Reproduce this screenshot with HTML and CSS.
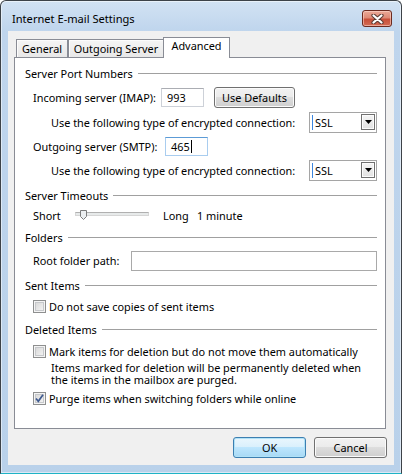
FILE: index.html
```html
<!DOCTYPE html>
<html>
<head>
<meta charset="utf-8">
<title>Internet E-mail Settings</title>
<link rel="stylesheet" href="styles.css">
</head>
<body>
<div class="window">
  <div class="titlebar">
    <span class="title">Internet E-mail Settings</span>
    <div class="close">
      <svg width="13" height="10" viewBox="0 0 13 10"><path d="M2.5 1.5 L10.5 8.5 M10.5 1.5 L2.5 8.5" stroke="#5a3a33" stroke-width="4.2" stroke-linecap="round"/><path d="M2.5 1.5 L10.5 8.5 M10.5 1.5 L2.5 8.5" stroke="#ffffff" stroke-width="2.2" stroke-linecap="round"/></svg>
    </div>
  </div>
  <div class="client">
    <div class="tabs">
      <div class="tab tab-general">General</div>
      <div class="tab tab-outgoing">Outgoing Server</div>
      <div class="tab tab-advanced">Advanced</div>
    </div>
    <div class="panel">
      <div class="group mt7"><span>Server Port Numbers</span></div>
      <div class="row mt6">
        <span class="label w-incoming">Incoming server (IMAP):</span>
        <div class="textbox port">993</div>
        <button class="btn btn-defaults">Use Defaults</button>
      </div>
      <div class="row mt5 indent">
        <span>Use the following type of encrypted connection:</span>
        <div class="combo"><span class="caret"></span><span class="combo-text">SSL</span><span class="combo-arrow"><svg width="7" height="4" viewBox="0 0 7 4"><path d="M0 0 H7 L3.5 4 Z" fill="#000"/></svg></span></div>
      </div>
      <div class="row mt4">
        <span class="label w-outgoing">Outgoing server (SMTP):</span>
        <div class="textbox port focused">465<span class="cursor"></span></div>
      </div>
      <div class="row mt4 indent">
        <span>Use the following type of encrypted connection:</span>
        <div class="combo"><span class="caret"></span><span class="combo-text">SSL</span><span class="combo-arrow"><svg width="7" height="4" viewBox="0 0 7 4"><path d="M0 0 H7 L3.5 4 Z" fill="#000"/></svg></span></div>
      </div>

      <div class="group mt7"><span>Server Timeouts</span></div>
      <div class="row mt2">
        <span class="label w-short">Short</span>
        <div class="slider">
          <span class="track"></span>
          <svg class="thumb" width="7" height="10" viewBox="0 0 7 10"><path d="M0.5 0.5 H6.5 V6.5 L3.5 9.5 L0.5 6.5 Z" fill="#eceff1" stroke="#7c7c7c"/></svg>
        </div>
        <span class="label w-long">Long</span>
        <span>1 minute</span>
      </div>

      <div class="group mt4"><span>Folders</span></div>
      <div class="row mt5">
        <span class="label w-root">Root folder path:</span>
        <div class="textbox root"></div>
      </div>

      <div class="group mt7"><span>Sent Items</span></div>
      <div class="row mt3">
        <span class="check"></span>
        <span>Do not save copies of sent items</span>
      </div>

      <div class="group mt5"><span>Deleted Items</span></div>
      <div class="row mt4">
        <span class="check"></span>
        <span>Mark items for deletion but do not move them automatically</span>
      </div>
      <div class="note">
        <div class="note-line">Items marked for deletion will be permanently deleted when</div>
        <div class="note-line">the items in the mailbox are purged.</div>
      </div>
      <div class="row mt2">
        <span class="check checked"><svg width="11" height="11" viewBox="0 0 11 11"><path d="M2 5.5 L4.3 8.3 L9 1.8" fill="none" stroke="#3f5a8f" stroke-width="1.7"/></svg></span>
        <span>Purge items when switching folders while online</span>
      </div>
    </div>
    <div class="buttons">
      <button class="btn btn-dialog btn-default">OK</button>
      <button class="btn btn-dialog">Cancel</button>
    </div>
  </div>
</div>
</body>
</html>
```

FILE: styles.css
```css
* {
  box-sizing: border-box;
}

html, body {
  margin: 0;
  padding: 0;
}

body {
  width: 402px;
  height: 474px;
  overflow: hidden;
  background: #ffffff;
  font-family: "Noto Sans", "Open Sans", sans-serif;
  font-size: 10.9px;
  color: #000;
}

.window {
  width: 402px;
  height: 474px;
  border: 1px solid #3d4248;
  border-bottom-color: #1fb3c6;
  border-radius: 6px 6px 0 0;
  background: linear-gradient(#d2e2f3 0, #bfd5ed 30px, #b9d1ea 100%);
  box-shadow: inset 0 0 0 1px rgba(255, 255, 255, 0.5);
  padding: 0 7px 8px 7px;
  display: flex;
  flex-direction: column;
}

.titlebar {
  height: 30px;
  display: flex;
  align-items: flex-start;
  justify-content: space-between;
  padding-left: 4px;
}

.title {
  margin-top: 10px;
  font-size: 11.1px;
  line-height: 16px;
}

.close {
  margin-top: 9px;
  margin-right: 2px;
  width: 30px;
  height: 17px;
  border: 1px solid #6b2a20;
  border-radius: 3px;
  background: linear-gradient(#eba998 0, #de8a76 45%, #c84f39 55%, #d36b54 100%);
  box-shadow: inset 0 0 0 1px rgba(255, 220, 210, 0.55);
  display: flex;
  align-items: center;
  justify-content: center;
}

.client {
  flex: 1;
  background: #f0f0f0;
  display: flex;
  flex-direction: column;
}

.tabs {
  height: 26px;
  display: flex;
  align-items: flex-end;
  padding-left: 8px;
}

.tab {
  height: 18px;
  border: 1px solid #898c95;
  border-bottom: none;
  background: linear-gradient(#f5f5f5, #e8e8e8);
  box-shadow: inset 1px 1px 0 #fcfcfc;
  display: flex;
  align-items: center;
  justify-content: center;
  line-height: 16px;
  padding-top: 1px;
}

.tab-general {
  width: 52px;
}

.tab-outgoing {
  width: 96px;
}

.tab-advanced {
  width: 67px;
  height: 21px;
  margin-left: -1px;
  margin-bottom: -1px;
  background: #ffffff;
  box-shadow: none;
  position: relative;
  z-index: 1;
  padding-top: 0;
  padding-bottom: 4px;
}

.panel {
  margin-left: 6px;
  width: 372px;
  height: 372px;
  border: 1px solid #898c95;
  background: #ffffff;
  padding: 0 8px 0 10px;
}

.group {
  height: 16px;
  display: flex;
  align-items: center;
  white-space: nowrap;
}

.group::after {
  content: "";
  flex: 1;
  height: 1px;
  background: #a0a0a0;
  margin-left: 5px;
}

.row {
  height: 20px;
  display: flex;
  align-items: center;
  padding-left: 8px;
  white-space: nowrap;
}

.row.indent {
  padding-left: 26px;
}

.mt2 { margin-top: 2px; }
.mt3 { margin-top: 3px; }
.mt4 { margin-top: 4px; }
.mt5 { margin-top: 5px; }
.mt6 { margin-top: 6px; }
.mt7 { margin-top: 7px; }

.label {
  flex: none;
}

.w-incoming { width: 128px; }
.w-outgoing { width: 132px; }
.w-short { width: 42px; }
.w-long { width: 34px; margin-left: 14px; }
.w-root { width: 98px; }

.textbox {
  height: 19px;
  background: #fff;
  border: 1px solid #cdd1d8;
  border-top-color: #abadb3;
  display: flex;
  align-items: center;
  padding-left: 5px;
}

.textbox.port {
  width: 43px;
}

.textbox.focused {
  border-color: #a9cdef;
  border-top-color: #5c9bd6;
}

.cursor {
  width: 1px;
  height: 13px;
  background: #000;
  margin-left: 1px;
}

.textbox.root {
  flex: 1;
  height: 20px;
  border: 1px solid #a9a9a9;
  margin-top: 1px;
}

.btn {
  font-family: inherit;
  font-size: inherit;
  color: #000;
  border: 1px solid #707070;
  border-radius: 3px;
  background: linear-gradient(#f2f2f2 0, #ebebeb 50%, #dddddd 50%, #cfcfcf 100%);
  box-shadow: inset 0 0 0 1px #fbfbfb;
  padding: 0;
  margin: 0;
  display: flex;
  align-items: center;
  justify-content: center;
}

.btn-defaults {
  width: 81px;
  height: 21px;
  margin-left: 10px;
}

.combo {
  margin-left: auto;
  width: 68px;
  height: 21px;
  border: 1px solid #a5a5a5;
  background: #fff;
  display: flex;
  align-items: center;
  padding: 1px;
}

.caret {
  width: 1px;
  height: 15px;
  background: #3c87e0;
  margin-left: 1px;
}

.combo-text {
  margin-left: 2px;
}

.combo-arrow {
  margin-left: auto;
  width: 14px;
  height: 16px;
  border: 1px solid #707070;
  background: linear-gradient(#f4f4f4, #e2e2e2);
  box-shadow: inset 0 0 0 1px #fcfcfc;
  display: flex;
  align-items: center;
  justify-content: center;
}

.slider {
  position: relative;
  width: 74px;
  height: 20px;
  flex: none;
}

.track {
  position: absolute;
  left: 0;
  right: 0;
  top: 7px;
  height: 4px;
  background: #e7eaea;
  border: 1px solid #d6d6d6;
  border-top-color: #b0b0b0;
}

.thumb {
  position: absolute;
  left: 5px;
  top: 5px;
}

.check {
  width: 13px;
  height: 13px;
  flex: none;
  border: 1px solid #8e8f8f;
  background: linear-gradient(135deg, #d3d3d3, #f8f8f8);
  box-shadow: inset 0 0 0 1px #f4f4f4, inset 0 0 0 2px #c6c8cb;
  margin-right: 3px;
  display: flex;
  align-items: center;
  justify-content: center;
}

.note {
  margin-top: 1px;
  padding-left: 26px;
}

.note-line {
  height: 12px;
  line-height: 12px;
  white-space: nowrap;
}

.buttons {
  display: flex;
  justify-content: flex-end;
  gap: 8px;
  margin-top: 8px;
  padding-right: 7px;
}

.btn-dialog {
  width: 73px;
  height: 21px;
}

.btn-default {
  border-color: #3c7fb1;
  box-shadow: inset 0 0 0 1px #b1e2f7;
  background: linear-gradient(#eaf6fd 0, #d9f0fc 50%, #bee6fd 50%, #a7d9f5 100%);
}
```
